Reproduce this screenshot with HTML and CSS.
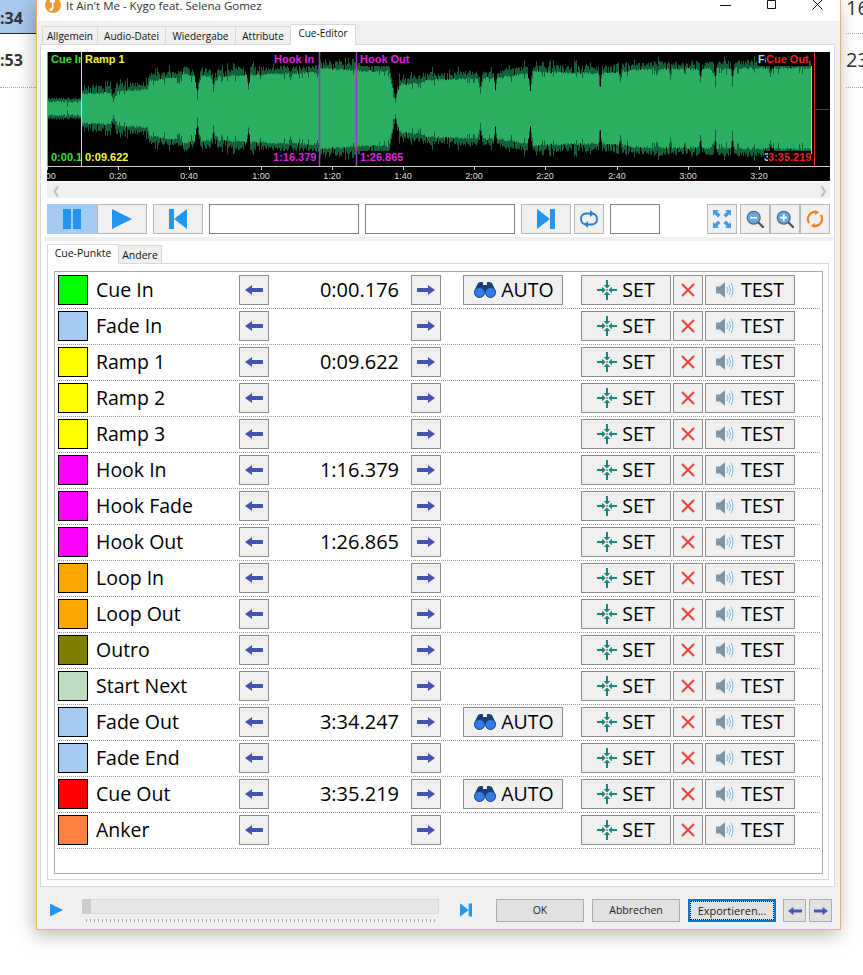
FILE: index.html
```html
<!DOCTYPE html>
<html lang="de">
<head>
    <meta charset="UTF-8">
    <title>Cue-Editor</title>
    <link rel="stylesheet" href="styles.css">
</head>
<body>
    <!-- icons -->
    <svg class="defs" width="0" height="0">
        <symbol id="i-left" viewBox="0 0 18 10"><path d="M0 5 7 0V3H18V7H7V10Z"/></symbol>
        <symbol id="i-right" viewBox="0 0 18 10"><path d="M18 5 11 0V3H0V7H11V10Z"/></symbol>
        <symbol id="i-pause" viewBox="0 0 18 20"><path d="M0 0H8V20H0ZM10 0H18V20H10Z"/></symbol>
        <symbol id="i-play" viewBox="0 0 20 20"><path d="M0 0 20 10 0 20Z"/></symbol>
        <symbol id="i-prev" viewBox="0 0 18 20"><path d="M0 0H5V20H0ZM18 0V20L5 10Z"/></symbol>
        <symbol id="i-next" viewBox="0 0 18 20"><path d="M0 0 13 10 0 20ZM13 0H18V20H13Z"/></symbol>
        <symbol id="i-loop" viewBox="0 0 18 18">
            <path d="M5.500 14.500Q1 13.500 1 9 1 4 6 3.500H11M12.500 3.500Q17 4.500 17 9 17 14 12 14.500H7" fill="none" stroke="#2a7cc8" stroke-width="1.800"/>
            <path d="M10 0 14 3.500 10 7ZM8 11 4 14.500 8 18Z" fill="#2a7cc8"/>
        </symbol>
        <symbol id="i-fit" viewBox="0 0 18 18">
            <path d="M0 0H6L4.300 1.700 7.500 5 5 7.500 1.700 4.300 0 6ZM18 0V6L16.300 4.300 13 7.500 10.500 5 13.700 1.700 12 0ZM0 18V12L1.700 13.700 5 10.500 7.500 13 4.300 16.300 6 18ZM18 18H12L13.700 16.300 10.500 13 13 10.500 16.300 13.700 18 12Z" fill="#3d9fe6"/>
        </symbol>
        <symbol id="i-zoomout" viewBox="0 0 21 21">
            <path d="M14 14 20 20" stroke="#4a5560" stroke-width="2.600" stroke-linecap="round"/>
            <circle cx="9" cy="9" r="7.500" fill="#6aa8d8" stroke="#47708f" stroke-width="1.500"/>
            <path d="M5 9H13" stroke="#fff" stroke-width="2"/>
        </symbol>
        <symbol id="i-zoomin" viewBox="0 0 21 21">
            <path d="M14 14 20 20" stroke="#4a5560" stroke-width="2.600" stroke-linecap="round"/>
            <circle cx="9" cy="9" r="7.500" fill="#6aa8d8" stroke="#47708f" stroke-width="1.500"/>
            <path d="M5 9H13M9 5V13" stroke="#fff" stroke-width="2"/>
        </symbol>
        <symbol id="i-refresh" viewBox="0 0 20 20">
            <path d="M3.500 14.500A8 8 0 0 1 11 2.200M16.500 5.500A8 8 0 0 1 9 17.800" fill="none" stroke="#f08322" stroke-width="2.400"/>
            <path d="M10 0 15 2.500 10 5.500ZM10 14.500 5 17.500 10 20Z" fill="#f08322"/>
        </symbol>
        <symbol id="i-set" viewBox="0 0 20 20">
            <path d="M10 8.500 6.800 5H9V0H11V5H13.200ZM10 11.500 6.800 15H9V20H11V15H13.200ZM8.500 10 5 6.800V9H0V11H5V13.200ZM11.500 10 15 6.800V9H20V11H15V13.200Z" fill="#138a78"/>
            <path d="M9.200 9.200H10.800V10.800H9.200Z" fill="#e0483c"/>
        </symbol>
        <symbol id="i-auto" viewBox="0 0 22 16">
            <path d="M3 3Q4 0 7 0H9V3H13V0H15Q18 0 19 3L22 10H0Z" fill="#1d3f78"/>
            <circle cx="5.500" cy="10.500" r="5" fill="#2f7fe6" stroke="#1d3f78"/>
            <circle cx="16.500" cy="10.500" r="5" fill="#2f7fe6" stroke="#1d3f78"/>
        </symbol>
        <symbol id="i-x" viewBox="0 0 14 14"><path d="M1 1 13 13M13 1 1 13" stroke="#e8483c" stroke-width="2.200" fill="none"/></symbol>
        <symbol id="i-test" viewBox="0 0 18 18">
            <path d="M0 5.500H4L9 1V17L4 12.500H0Z" fill="#7c96a8"/>
            <path d="M11 6Q13 9 11 12M13 4Q16 9 13 14M15 2Q19 9 15 16" fill="none" stroke="#79bfe6" stroke-width="1"/>
        </symbol>
    </svg>

    <!-- window behind -->
    <div class="behind behind_l">
        <div class="cell cell_on">:34</div>
        <div class="cell">:53</div>
    </div>
    <div class="behind behind_r">
        <div class="cell">16</div>
        <div class="cell">23</div>
    </div>

    <div class="window">
        <div class="titlebar">
            <svg class="applogo" viewBox="0 0 16 16"><circle cx="8" cy="8" r="8" fill="#f09a28"/><path d="M5 3H10V5L8.500 6V12Q8 14.500 5.500 14 4 13 5 11.500 6 10.500 7 10.800V5.500H5Z" fill="#fff"/></svg>
            <div class="title">It Ain't Me - Kygo feat. Selena Gomez</div>
            <div class="winbtns">
                <svg viewBox="0 0 11 11"><path d="M0 6.500H11" stroke="#111"/></svg>
                <svg viewBox="0 0 11 11"><path d="M1.500 1.500H9.500V9.500H1.500Z" fill="none" stroke="#111"/></svg>
                <svg viewBox="0 0 11 11"><path d="M0.500 0.500 10.500 10.500M10.500 0.500 0.500 10.500" stroke="#111"/></svg>
            </div>
        </div>

        <div class="tabs">
            <div class="tab">Allgemein</div>
            <div class="tab">Audio-Datei</div>
            <div class="tab">Wiedergabe</div>
            <div class="tab">Attribute</div>
            <div class="tab tab_on">Cue-Editor</div>
        </div>

        <div class="panel">
            <div class="wave" id="wave">
                <svg class="wave_svg" width="783" height="114" viewBox="0 0 783 114">
                    <path id="wave_dark" class="dark" d=""/>
                    <path id="wave_light" class="light" d=""/>
                    <path class="idle" d="M768 57.500H783"/>
                    <path class="line_fade" d="M764.500 14V102"/>
                    <path class="line_in" d="M0.500 0V114"/>
                    <path class="line_ramp" d="M34.500 0V114"/>
                    <path class="line_hook" d="M272.500 0V114M309.500 0V114"/>
                    <path class="line_out" d="M767.500 0V114"/>
                </svg>
                <div class="ruler" id="ruler"></div>
            </div>

            <div class="hscroll"><span>&#10094;</span><span>&#10095;</span></div>

            <div class="toolbar">
                <div class="tb tb_on"><svg class="ic20" viewBox="0 0 18 20"><use href="#i-pause"/></svg></div>
                <div class="tb"><svg class="ic20" viewBox="0 0 20 20"><use href="#i-play"/></svg></div>
                <div class="tb gap6"><svg class="ic20" viewBox="0 0 18 20"><use href="#i-prev"/></svg></div>
                <div class="field gap6"></div>
                <div class="field gap6"></div>
                <div class="tb gap6"><svg class="ic20" viewBox="0 0 18 20"><use href="#i-next"/></svg></div>
                <div class="tb tb_s gap3"><svg class="ic18"><use href="#i-loop"/></svg></div>
                <div class="field field_s gap6"></div>
                <div class="tb tb_s gap47"><svg class="ic18"><use href="#i-fit"/></svg></div>
                <div class="tb tb_s gap3"><svg class="ic18"><use href="#i-zoomout"/></svg></div>
                <div class="tb tb_s"><svg class="ic18"><use href="#i-zoomin"/></svg></div>
                <div class="tb tb_s"><svg class="ic18"><use href="#i-refresh"/></svg></div>
            </div>

            <div class="strip"></div>

            <div class="subtabs">
                <div class="subtab subtab_on">Cue-Punkte</div>
                <div class="subtab">Andere</div>
            </div>
            <div class="subpanel">
                <div class="list" id="list"></div>
            </div>
        </div>

        <div class="footer">
            <svg class="f_play" viewBox="0 0 20 20"><use href="#i-play"/></svg>
            <div class="slider">
                <div class="track"><div class="thumb"></div></div>
                <div class="ticks"></div>
            </div>
            <svg class="f_next" viewBox="0 0 18 20"><use href="#i-next"/></svg>
            <div class="fbtn">OK</div>
            <div class="fbtn">Abbrechen</div>
            <div class="fbtn fbtn_on"><span>Exportieren...</span></div>
            <div class="fbtn fbtn_s"><svg class="arrow"><use href="#i-left"/></svg></div>
            <div class="fbtn fbtn_s"><svg class="arrow"><use href="#i-right"/></svg></div>
        </div>
    </div>

    <script src="script.js"></script>
</body>
</html>
```

FILE: styles.css
```css
* {
    box-sizing: border-box;
}
html, body {
    margin: 0;
    padding: 0;
    height: 975px;
    overflow: hidden;
    background: #fff;
    font-family: "Open Sans", "Liberation Sans", sans-serif;
}
.defs {
    position: absolute;
}

/* window behind */
.behind {
    position: absolute;
    top: 0;
    color: #333;
}
.behind_l {
    left: 0;
    width: 36px;
    font-size: 16px;
    font-weight: bold;
}
.behind_r {
    left: 842px;
    width: 21px;
    padding-left: 4px;
    font-size: 20px;
}
.cell {
    height: 54px;
    line-height: 32px;
    padding-top: 10px;
    border-bottom: 1px dotted #aaa;
    white-space: nowrap;
    overflow: hidden;
}
.behind .cell:first-child {
    height: 34px;
    padding-top: 0;
    line-height: 36px;
}
.behind_r .cell:first-child {
    line-height: 16px;
}
.cell_on {
    background: #a9c9ee;
    border-bottom: 1px solid #222 !important;
}

/* window */
.window {
    position: absolute;
    left: 36px;
    top: 0;
    width: 805px;
    height: 930px;
    background: #f0f0f0;
    border: 1px solid #e5b56c;
    border-top: 0;
    box-shadow: -2px 5px 18px rgba(0, 0, 0, 0.28);
}
.titlebar {
    height: 21px;
    background: #fff;
    display: flex;
    align-items: flex-start;
    padding-left: 8px;
}
.applogo {
    width: 16px;
    height: 16px;
    margin-top: -3px;
}
.title {
    margin-left: 5px;
    font-size: 11.5px;
    line-height: 12px;
    color: #333;
}
.winbtns {
    margin-left: auto;
    display: flex;
    gap: 35px;
    padding-right: 17px;
}
.winbtns svg {
    width: 11px;
    height: 11px;
    margin-top: -1px;
}
.tabs {
    height: 24px;
    display: flex;
    align-items: flex-end;
    padding: 0 0 0 5px;
    position: relative;
    z-index: 1;
    margin-bottom: -1px;
}
.tab {
    height: 19px;
    font-size: 10px;
    line-height: 19px;
    text-align: center;
    color: #111;
    background: #f0f0f0;
    border: 1px solid #d9d9d9;
    border-left: 0;
}
.tab:nth-child(1) { width: 56px; border-left: 1px solid #d9d9d9; }
.tab:nth-child(2) { width: 68px; }
.tab:nth-child(3) { width: 70px; }
.tab:nth-child(4) { width: 55px; }
.tab_on {
    width: 65px;
    height: 21px;
    background: #fff;
    border-bottom: 0;
    line-height: 17px;
}
.panel {
    margin-left: 3px;
    width: 795px;
    height: 843px;
    background: #fff;
    border: 1px solid #d9d9d9;
    padding: 7px 4px 0 6px;
}

/* waveform */
.wave {
    position: relative;
    width: 783px;
    height: 129px;
    background: #000;
    overflow: hidden;
}
.wave_svg {
    display: block;
}
.dark { stroke: #12603a; fill: none; }
.light { stroke: #2aae62; fill: none; }
.idle { stroke: #444; }
.line_fade { stroke: #a6caf0; }
.line_in { stroke: #3fd03f; }
.line_ramp { stroke: #e8e84a; }
.line_hook { stroke: #a034c4; stroke-width: 1.500; }
.line_out { stroke: #e02020; }
.mark {
    position: absolute;
    font: bold 11px/13px "Liberation Sans", sans-serif;
    background: #000;
    white-space: nowrap;
    overflow: hidden;
}
.m_top { top: 1px; }
.m_bot { top: 99px; }
.c_in { color: #2fe02f; }
.c_fade { color: #a6caf0; }
.c_ramp { color: #f4f43c; }
.c_hook { color: #e020e0; }
.c_out { color: #f02020; }
.ruler {
    height: 15px;
    border-top: 1px solid #ccc;
    position: relative;
}
.rtick {
    position: absolute;
    top: 0;
    width: 1px;
    height: 3px;
    background: #ccc;
}
.rlabel {
    position: absolute;
    top: 3px;
    width: 30px;
    margin-left: -15px;
    text-align: center;
    font: 9px/12px "Liberation Sans", sans-serif;
    color: #ddd;
}
.hscroll {
    margin-top: 1px;
    height: 16px;
    background: #f0f0f0;
    color: #bbb;
    font-size: 10px;
    line-height: 16px;
    display: flex;
    justify-content: space-between;
    padding: 0 3px 0 5px;
}

/* toolbar */
.toolbar {
    display: flex;
    margin-top: 6px;
    height: 30px;
}
.tb {
    width: 50px;
    height: 30px;
    background: #f0f0f0;
    border: 1px solid #b8b8b8;
    display: flex;
    align-items: center;
    justify-content: center;
}
.tb_on {
    background: #a6cbf0;
    border-color: #a6cbf0;
}
.tb_s {
    width: 30px;
}
.field {
    width: 150px;
    height: 30px;
    background: #fff;
    border: 1px solid #808080;
}
.field_s {
    width: 50px;
}
.gap3 { margin-left: 3px; }
.gap6 { margin-left: 6px; }
.gap47 { margin-left: 47px; }
.ic20 { width: 20px; height: 20px; fill: #2196f3; }
.ic18 { width: 18px; height: 18px; }
.strip {
    margin: 3px -3px 0 -3px;
    height: 4px;
    background: #f0f0f0;
}

/* cue list */
.subtabs {
    height: 23px;
    display: flex;
    align-items: flex-end;
    position: relative;
    z-index: 1;
    margin-bottom: -1px;
}
.subtab {
    width: 43px;
    height: 19px;
    font-size: 10.500px;
    line-height: 18px;
    text-align: center;
    color: #111;
    background: #f0f0f0;
    border: 1px solid #d9d9d9;
    border-left: 0;
}
.subtab_on {
    width: 72px;
    height: 20px;
    background: #fff;
    border-left: 1px solid #d9d9d9;
    border-bottom: 0;
    line-height: 16px;
}
.subpanel {
    width: 782px;
    height: 617px;
    border: 1px solid #d9d9d9;
    padding: 7px 5px 5px 6px;
}
.list {
    height: 603px;
    border: 1px solid #aaa;
    padding: 1px 2px 0 2px;
}
.row {
    display: flex;
    align-items: flex-start;
    height: 36px;
    padding: 2px 0 0 1px;
    border-bottom: 1px dotted #999;
    color: #000;
    font-size: 19.500px;
    line-height: 30px;
}
.swatch {
    width: 30px;
    height: 30px;
    border: 1px solid #000;
}
.name {
    width: 151px;
    padding-left: 8px;
    white-space: nowrap;
}
.time {
    width: 130px;
    text-align: right;
    font-size: 20px;
}
.auto_slot {
    width: 100px;
    margin: 0 18px 0 22px;
}
.btn {
    height: 30px;
    background: #f0f0f0;
    border: 1px solid #8c8c8c;
    display: flex;
    align-items: center;
    justify-content: center;
    font-size: 19.500px;
    color: #000;
}
.btn_arrow { width: 30px; }
.time + .btn_arrow { margin-left: 12px; }
.btn_auto { width: 100px; gap: 5px; padding-left: 2px; }
.btn_set { width: 90px; gap: 5px; }
.btn_x { width: 30px; margin: 0 2px; }
.btn_test { width: 90px; gap: 7px; }
.arrow { width: 18px; height: 10px; fill: #4656b0; }
.i_set { width: 20px; height: 20px; }
.i_auto { width: 22px; height: 16px; }
.i_x { width: 14px; height: 14px; }
.i_test { width: 18px; height: 18px; }

/* footer */
.footer {
    display: flex;
    align-items: flex-start;
    height: 42px;
    padding: 12px 0 0 13px;
}
.f_play {
    width: 13px;
    height: 14px;
    margin-top: 4px;
    fill: #2196f3;
}
.slider {
    width: 357px;
    margin-left: 19px;
}
.track {
    height: 15px;
    background: #e6e7e8;
    border: 1px solid #dadada;
}
.thumb {
    width: 9px;
    height: 15px;
    margin: -1px 0 0 -1px;
    background: #ccc;
}
.ticks {
    margin: 5px 4px 0 4px;
    height: 3px;
    background: repeating-linear-gradient(90deg, #a8a8a8 0, #a8a8a8 1px, transparent 1px, transparent 4px);
}
.f_next {
    width: 12px;
    height: 14px;
    margin: 4px 24px 0 21px;
    fill: #2196f3;
}
.fbtn {
    width: 88px;
    height: 23px;
    margin-right: 8px;
    background: #e1e1e1;
    border: 1px solid #adadad;
    font-size: 10.500px;
    line-height: 21px;
    text-align: center;
    color: #222;
}
.fbtn_on {
    border: 2px solid #0078d7;
    background: #e1e1e1;
    font-size: 11px;
    line-height: 17px;
}
.fbtn_on span {
    display: block;
    height: 19px;
    border: 1px dotted #111;
}
.fbtn_s {
    width: 23px;
    margin-right: 3px;
    display: flex;
    align-items: center;
    justify-content: center;
}
.fbtn_s:nth-last-child(2) {
    margin-left: -1px;
}
.fbtn_s .arrow {
    width: 14px;
    height: 8px;
}
```

FILE: script.js
```js
// cue rows
var cues = [
    ["Cue In", "#00ff00", "0:00.176", true],
    ["Fade In", "#a6caf0", "", false],
    ["Ramp 1", "#ffff00", "0:09.622", false],
    ["Ramp 2", "#ffff00", "", false],
    ["Ramp 3", "#ffff00", "", false],
    ["Hook In", "#ff00ff", "1:16.379", false],
    ["Hook Fade", "#ff00ff", "", false],
    ["Hook Out", "#ff00ff", "1:26.865", false],
    ["Loop In", "#ffa500", "", false],
    ["Loop Out", "#ffa500", "", false],
    ["Outro", "#808000", "", false],
    ["Start Next", "#c0dcc0", "", false],
    ["Fade Out", "#a6caf0", "3:34.247", true],
    ["Fade End", "#a6caf0", "", false],
    ["Cue Out", "#ff0000", "3:35.219", true],
    ["Anker", "#ff8040", "", false]
];
var list = document.getElementById("list");
var html = "";
for (var i = 0; i < cues.length; i++) {
    var c = cues[i];
    html += '<div class="row">'
        + '<div class="swatch" style="background:' + c[1] + '"></div>'
        + '<div class="name">' + c[0] + '</div>'
        + '<div class="btn btn_arrow"><svg class="arrow"><use href="#i-left"/></svg></div>'
        + '<div class="time">' + c[2] + '</div>'
        + '<div class="btn btn_arrow"><svg class="arrow"><use href="#i-right"/></svg></div>'
        + '<div class="auto_slot">'
        + (c[3] ? '<div class="btn btn_auto"><svg class="i_auto"><use href="#i-auto"/></svg>AUTO</div>' : '')
        + '</div>'
        + '<div class="btn btn_set"><svg class="i_set"><use href="#i-set"/></svg>SET</div>'
        + '<div class="btn btn_x"><svg class="i_x"><use href="#i-x"/></svg></div>'
        + '<div class="btn btn_test"><svg class="i_test"><use href="#i-test"/></svg>TEST</div>'
        + '</div>';
}
list.innerHTML = html;

// waveform: envelope as [page x, amplitude], dips as [page x, half width, amplitude]
var keys = [[47, 8], [81, 8], [82, 16], [115, 17], [117, 19], [147, 20], [149, 29], [180, 32], [183, 37], [190, 34],
    [215, 33], [245, 35], [250, 35], [318, 37], [320, 41], [355, 40], [358, 39], [388, 39], [391, 27], [395, 8],
    [399, 25], [420, 27], [430, 30], [500, 32], [535, 38], [600, 36], [640, 40], [810, 42]];
var dips = [[113, 2, 9], [197, 2, 15], [213, 2, 22], [248, 1, 21], [290, 1, 30], [480, 2, 17], [495, 1, 20], [530, 2, 18],
    [600, 1, 24], [620, 1, 28], [670, 1, 30], [700, 1, 28], [715, 1, 28], [732, 1, 28], [770, 1, 32]];
var seed = 7;
function rnd() {
    seed = (seed * 16807) % 2147483647;
    return seed / 2147483647;
}
function amp(x) {
    var a = 0;
    for (var k = 0; k < keys.length - 1; k++) {
        if (x >= keys[k][0] && x <= keys[k + 1][0]) {
            a = keys[k][1] + (keys[k + 1][1] - keys[k][1]) * (x - keys[k][0]) / (keys[k + 1][0] - keys[k][0]);
        }
    }
    for (var d = 0; d < dips.length; d++) {
        var dist = Math.abs(x - dips[d][0]);
        if (dist <= dips[d][1]) {
            var t = dist / (dips[d][1] + 1);
            a = Math.min(a, dips[d][2] + (a - dips[d][2]) * t);
        }
    }
    return a;
}
var dark = "", light = "";
for (var x = 48; x <= 811; x++) {
    var a = amp(x), lx = x - 47 + 0.5;
    var big = rnd() < 0.12 ? 5 : 0;
    var da = a + 2 + rnd() * 5 + big;
    if (rnd() < 0.1) {
        da = a - 2;
    }
    var la = a - rnd() * 2.5;
    if (rnd() < 0.08) {
        la -= 5;
    }
    if (a <= 8) {
        da = a + 1 + rnd() * 2;
    }
    dark += "M" + lx + " " + (56.5 - da).toFixed(1) + "V" + (56.5 + da).toFixed(1);
    light += "M" + lx + " " + (56.5 - la).toFixed(1) + "V" + (56.5 + la).toFixed(1);
}
document.getElementById("wave_dark").setAttribute("d", dark);
document.getElementById("wave_light").setAttribute("d", light);

// labels on the waveform: text, colour, row, left, width
var marks = [
    ["Cue In", "c_in", "m_top", 4, 30],
    ["0:00.176", "c_in", "m_bot", 4, 30],
    ["Ramp 1", "c_ramp", "m_top", 38, 0],
    ["0:09.622", "c_ramp", "m_bot", 38, 0],
    ["Hook In", "c_hook", "m_top", 227, 0],
    ["1:16.379", "c_hook", "m_bot", 226, 0],
    ["Hook Out", "c_hook", "m_top", 313, 0],
    ["1:26.865", "c_hook", "m_bot", 313, 0],
    ["Fade", "c_fade", "m_top", 711, 8],
    ["Cue Out", "c_out", "m_top", 719, 0],
    ["3:34.247", "c_fade", "m_bot", 717, 4],
    ["3:35.219", "c_out", "m_bot", 721, 0]
];
var wave = document.getElementById("wave");
marks.forEach(function (m) {
    var el = document.createElement("div");
    el.className = "mark " + m[1] + " " + m[2];
    el.textContent = m[0];
    el.style.left = m[3] + "px";
    if (m[4]) {
        el.style.width = m[4] + "px";
    }
    wave.appendChild(el);
});

// time ruler, one tick every 20 seconds
var ruler = document.getElementById("ruler");
var step = 71.2;
for (var n = 0; n <= 10; n++) {
    var pos = Math.round(n * step);
    var sec = n * 20;
    var text = Math.floor(sec / 60) + ":" + ("0" + (sec % 60)).slice(-2);
    var tick = document.createElement("div");
    tick.className = "rtick";
    tick.style.left = pos + "px";
    var label = document.createElement("div");
    label.className = "rlabel";
    label.style.left = pos + "px";
    label.textContent = text;
    ruler.appendChild(tick);
    ruler.appendChild(label);
}
```
